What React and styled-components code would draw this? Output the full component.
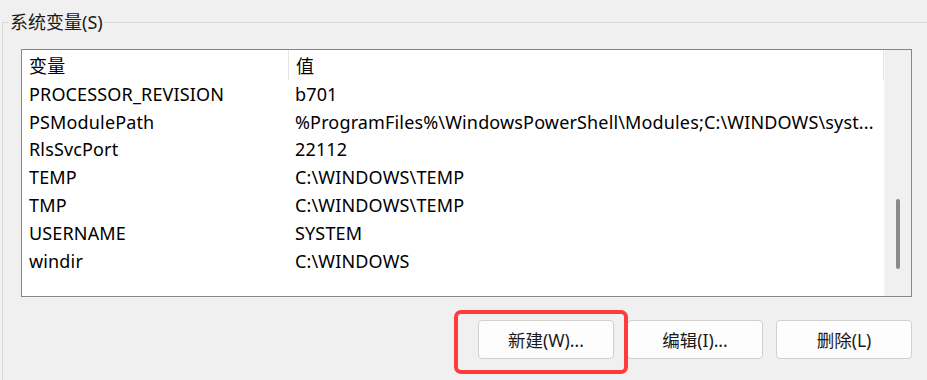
import React from "react";
import styled, { createGlobalStyle } from "styled-components";

const GlobalStyle = createGlobalStyle`
  html, body {
    margin: 0;
    padding: 0;
    background: #f0f0f0;
    font-family: "Noto Sans", "Noto Sans CJK SC", sans-serif;
    color: #000;
    overflow: hidden;
  }
`;

const Page = styled.div`
  width: 927px;
  height: 380px;
  padding-top: 11px;
  box-sizing: border-box;
`;

const Group = styled.fieldset`
  margin: 0 0 0 2px;
  padding: 16px 15px 40px 18px;
  border: none;
  border-top: 1px solid #dadada;
  border-left: 1px solid #dadada;
  min-width: 0;
`;

const Legend = styled.legend`
  font-size: 18px;
  padding: 0 1px;
  margin-left: -12px;
  line-height: 22px;
  color: #1a1a1a;
`;

const ListBox = styled.div`
  height: 248px;
  border: 1px solid #828790;
  background: #fff;
  display: flex;
  box-sizing: border-box;
`;

const Table = styled.div`
  flex: 1;
  display: flex;
  flex-direction: column;
`;

const Row = styled.div`
  display: grid;
  grid-template-columns: 266px 1fr;
  height: ${(p) => (p.$head ? "30px" : "27.8px")};
  flex-shrink: 0;
  align-items: center;
  font-size: 18px;
  letter-spacing: 0.15px;
  white-space: nowrap;
`;

const Cell = styled.div`
  padding-left: 7px;
  height: 100%;
  display: flex;
  align-items: center;
  overflow: hidden;
  border-left: ${(p) => (p.$divider ? "1px solid #e5e5e5" : "none")};
  border-right: ${(p) => (p.$end ? "1px solid #e5e5e5" : "none")};
`;

const Scrollbar = styled.div`
  width: 26px;
  background: #f0f0f0;
  border-left: 1px solid #f7f7f7;
  display: flex;
  justify-content: center;
  padding-top: 149px;
`;

const Thumb = styled.div`
  width: 4px;
  height: 70px;
  border-radius: 2px;
  background: #8a8a8a;
`;

const Buttons = styled.div`
  display: flex;
  justify-content: flex-end;
  gap: 13px;
  margin-top: 23px;
`;

const ButtonWrap = styled.div`
  position: relative;
`;

const Highlight = styled.div`
  position: absolute;
  left: -24px;
  top: -10px;
  right: -14px;
  bottom: -15px;
  border: 4px solid #ff3b3b;
  border-radius: 7px;
  pointer-events: none;
`;

const Button = styled.button`
  width: 136px;
  height: 39px;
  border: 1px solid #d0d0d0;
  border-radius: 4px;
  background: #fdfdfd;
  font-family: inherit;
  font-size: 17.5px;
  color: #1a1a1a;
  padding: 0;
`;

const rows = [
  ["PROCESSOR_REVISION", "b701"],
  ["PSModulePath", "%ProgramFiles%\\WindowsPowerShell\\Modules;C:\\WINDOWS\\syst..."],
  ["RlsSvcPort", "22112"],
  ["TEMP", "C:\\WINDOWS\\TEMP"],
  ["TMP", "C:\\WINDOWS\\TEMP"],
  ["USERNAME", "SYSTEM"],
  ["windir", "C:\\WINDOWS"],
];

export default function App() {
  return (
    <Page>
      <GlobalStyle />
      <Group>
        <Legend>系统变量(S)</Legend>
        <ListBox>
          <Table>
            <Row $head>
              <Cell>变量</Cell>
              <Cell $divider $end>值</Cell>
            </Row>
            {rows.map(([name, value]) => (
              <Row key={name}>
                <Cell>{name}</Cell>
                <Cell>{value}</Cell>
              </Row>
            ))}
          </Table>
          <Scrollbar>
            <Thumb />
          </Scrollbar>
        </ListBox>
        <Buttons>
          <ButtonWrap>
            <Highlight />
            <Button>新建(W)...</Button>
          </ButtonWrap>
          <Button>编辑(I)...</Button>
          <Button>删除(L)</Button>
        </Buttons>
      </Group>
    </Page>
  );
}
